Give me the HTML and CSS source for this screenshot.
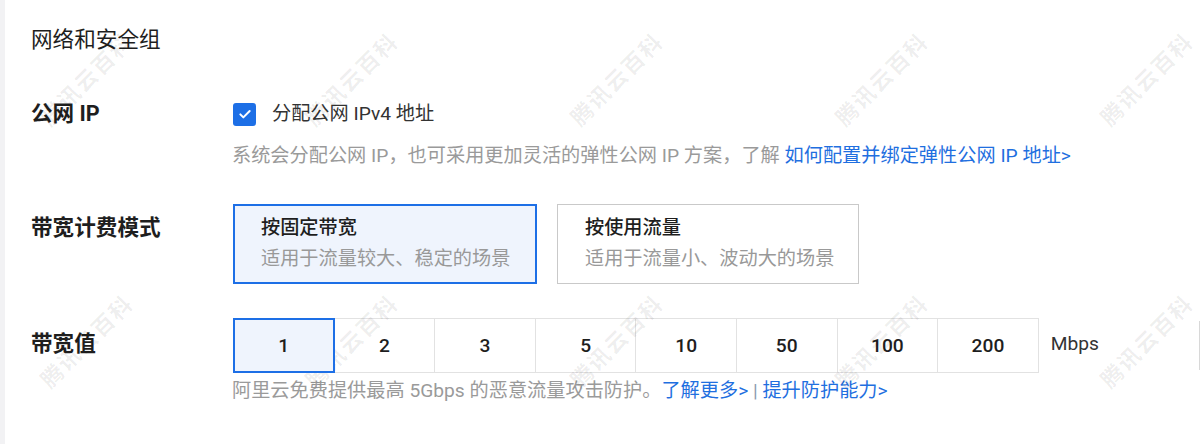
FILE: index.html
```html
<!DOCTYPE html>
<html lang="zh-CN">
<head>
<meta charset="utf-8">
<title>网络和安全组</title>
<link rel="stylesheet" href="styles.css">
</head>
<body>
<div class="page">
  <div class="section-title">网络和安全组</div>

  <div class="row row-ip">
    <div class="label">公网 IP</div>
    <div class="content">
      <div class="check-line">
        <span class="checkbox">
          <svg viewBox="0 0 24 24" width="16" height="16"><path d="M5 12.5l4.5 4.5L19 7.5" fill="none" stroke="#fff" stroke-width="3" stroke-linecap="round" stroke-linejoin="round"/></svg>
        </span>
        <span class="check-text">分配公网 IPv4 地址</span>
      </div>
      <div class="help help-ip">系统会分配公网 IP，也可采用更加灵活的弹性公网 IP 方案，了解 <a class="link">如何配置并绑定弹性公网 IP 地址&gt;</a></div>
    </div>
  </div>

  <div class="row row-bill">
    <div class="label label-bill">带宽计费模式</div>
    <div class="content cards">
      <div class="card selected">
        <div class="card-title">按固定带宽</div>
        <div class="card-sub">适用于流量较大、稳定的场景</div>
      </div>
      <div class="card card-2">
        <div class="card-title">按使用流量</div>
        <div class="card-sub">适用于流量小、波动大的场景</div>
      </div>
    </div>
  </div>

  <div class="row row-bw">
    <div class="label label-bw">带宽值</div>
    <div class="content">
      <div class="bw-line">
        <div class="cells">
          <div class="cell selected">1</div>
          <div class="cell">2</div>
          <div class="cell">3</div>
          <div class="cell">5</div>
          <div class="cell">10</div>
          <div class="cell">50</div>
          <div class="cell">100</div>
          <div class="cell">200</div>
        </div>
        <span class="unit">Mbps</span>
        <div class="bw-input"></div>
      </div>
      <div class="help help-bw">阿里云免费提供最高 5Gbps 的恶意流量攻击防护。<a class="link">了解更多&gt;</a><span class="sep"> | </span><a class="link">提升防护能力&gt;</a></div>
    </div>
  </div>
</div>

<div class="wm-layer">
  <div class="watermarks">
    <span class="wm">腾讯云百科</span>
    <span class="wm">腾讯云百科</span>
    <span class="wm">腾讯云百科</span>
    <span class="wm">腾讯云百科</span>
    <span class="wm">腾讯云百科</span>
    <span class="wm">腾讯云百科</span>
    <span class="wm">腾讯云百科</span>
    <span class="wm">腾讯云百科</span>
    <span class="wm">腾讯云百科</span>
    <span class="wm">腾讯云百科</span>
  </div>
</div>
</body>
</html>
```
FILE: styles.css
```css
html, body {
  margin: 0;
  padding: 0;
  background: #fff;
}
body {
  width: 1200px;
  height: 444px;
  overflow: hidden;
  position: relative;
  font-family: "Roboto", "Noto Sans CJK SC", sans-serif;
  color: #222;
}
.page {
  border-left: 5px solid #f2f2f4;
  padding-left: 26px;
  height: 444px;
  box-sizing: border-box;
}
.section-title {
  padding-top: 25px;
  font-size: 21.6px;
  line-height: 30px;
  color: #1e1e1e;
}
.row {
  display: flex;
  align-items: flex-start;
}
.label {
  width: 201px;
  flex: none;
  font-size: 21.6px;
  line-height: 30px;
  font-weight: 700;
  color: #1e1e1e;
}
.content {
  flex: 1;
  min-width: 0;
}
.row-ip { margin-top: 44px; }
.check-line {
  display: flex;
  align-items: center;
  height: 30px;
}
.checkbox {
  width: 23px;
  height: 23px;
  margin-left: 1px;
  border-radius: 3px;
  background: #1d6fe6;
  display: flex;
  align-items: center;
  justify-content: center;
  flex: none;
}
.check-text {
  margin-left: 16px;
  font-size: 19.2px;
  line-height: 30px;
  color: #333;
}
.help {
  font-size: 19.2px;
  line-height: 30px;
  color: #9a9a9a;
  white-space: nowrap;
}
.help-ip { margin-top: 12px; }
.link {
  color: #1f6fe0;
  text-decoration: none;
}
.sep { color: #8a9ab0; }

.row-bill { margin-top: 33px; }
.label-bill { margin-top: 9px; }
.cards {
  display: flex;
  gap: 20px;
  padding-left: 1px;
}
.card {
  box-sizing: border-box;
  height: 80px;
  border: 1px solid #c9c9c9;
  padding: 9px 27px 0;
  background: #fff;
  white-space: nowrap;
}
.card.selected {
  width: 304px;
  border: 2px solid #1d6fe6;
  padding: 8px 26px 0;
  background: #eff4fd;
}
.card-2 { width: 302px; }
.card-title {
  font-size: 19.2px;
  line-height: 28px;
  font-weight: 500;
  color: #1e1e1e;
}
.card-sub {
  margin-top: 3px;
  font-size: 19.2px;
  line-height: 28px;
  color: #999;
}

.row-bw { margin-top: 34px; }
.label-bw { margin-top: 11px; }
.bw-line {
  display: flex;
  align-items: center;
  padding-left: 1px;
}
.cells {
  display: flex;
}
.cell {
  box-sizing: border-box;
  width: 101.6px;
  height: 55px;
  border: 1px solid #e2e2e2;
  margin-left: -1px;
  display: flex;
  align-items: center;
  justify-content: center;
  font-size: 19.2px;
  font-weight: 500;
  color: #1e1e1e;
  background: #fff;
}
.cell:first-child { margin-left: 0; }
.cell.selected {
  position: relative;
  z-index: 1;
  border: 2px solid #1d6fe6;
  background: #eff4fd;
}
.unit {
  margin-left: 12px;
  margin-top: -4px;
  font-size: 19.2px;
  color: #333;
}
.bw-input {
  margin-left: 100px;
  width: 5px;
  height: 49px;
  box-sizing: border-box;
  border: 1px solid #d8d8d8;
  border-right: none;
  flex: none;
}
.help-bw { margin-top: 3px; }

.wm-layer {
  position: absolute;
  left: 0;
  top: 0;
  width: 1200px;
  height: 444px;
  overflow: hidden;
  pointer-events: none;
}
.watermarks {
  margin-left: -47px;
  margin-top: -53px;
  width: 1325px;
  display: grid;
  grid-template-columns: repeat(5, 265px);
  grid-template-rows: repeat(2, 262px);
}
.wm {
  display: flex;
  align-items: center;
  justify-content: center;
  transform: rotate(-45deg);
  font-family: "Noto Sans CJK SC", sans-serif;
  font-size: 22px;
  font-weight: 700;
  letter-spacing: 2px;
  color: rgba(0, 0, 0, 0.07);
  white-space: nowrap;
}
```
